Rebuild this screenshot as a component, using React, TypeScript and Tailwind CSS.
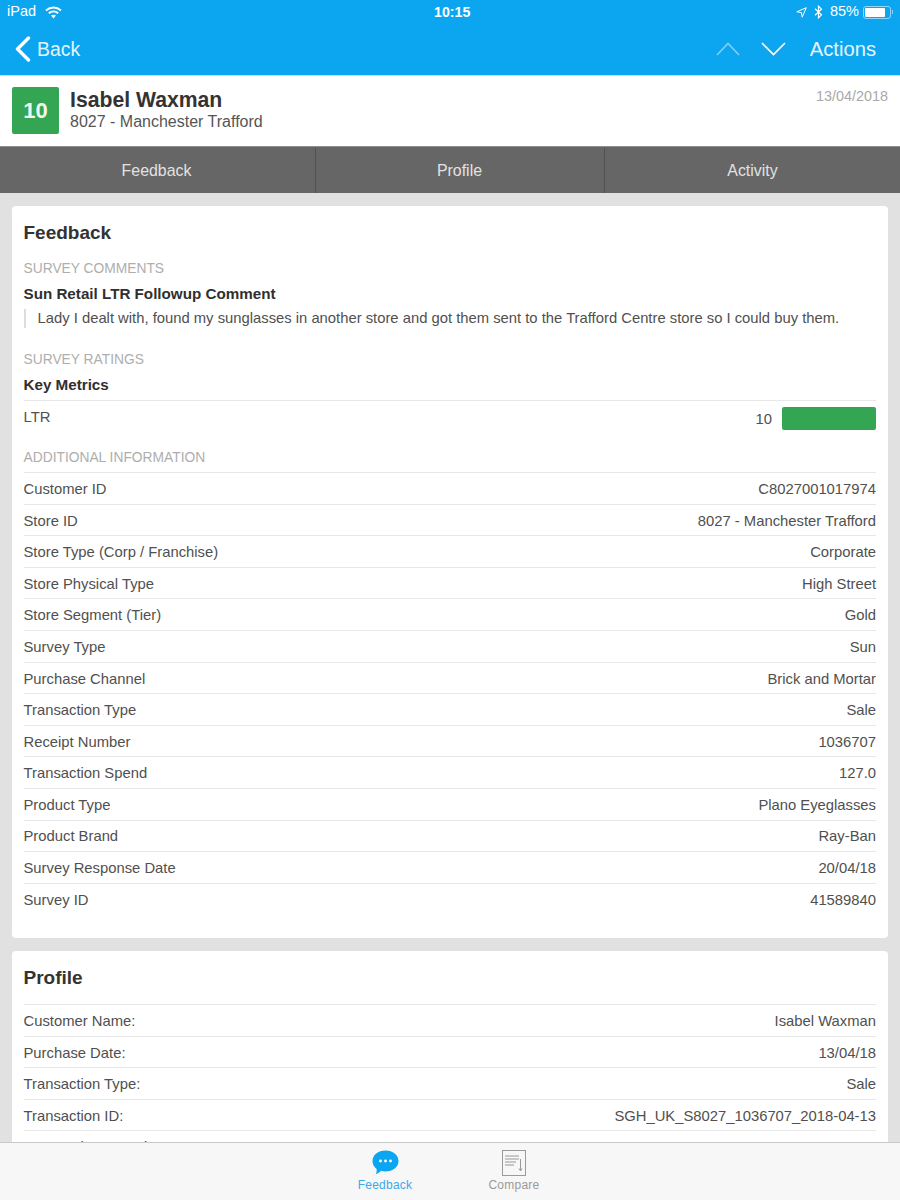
import React from "react";

const info: [string, string][] = [
  ["Customer ID", "C8027001017974"],
  ["Store ID", "8027 - Manchester Trafford"],
  ["Store Type (Corp / Franchise)", "Corporate"],
  ["Store Physical Type", "High Street"],
  ["Store Segment (Tier)", "Gold"],
  ["Survey Type", "Sun"],
  ["Purchase Channel", "Brick and Mortar"],
  ["Transaction Type", "Sale"],
  ["Receipt Number", "1036707"],
  ["Transaction Spend", "127.0"],
  ["Product Type", "Plano Eyeglasses"],
  ["Product Brand", "Ray-Ban"],
  ["Survey Response Date", "20/04/18"],
  ["Survey ID", "41589840"],
];
const profile: [string, string][] = [
  ["Customer Name:", "Isabel Waxman"],
  ["Purchase Date:", "13/04/18"],
  ["Transaction Type:", "Sale"],
  ["Transaction ID:", "SGH_UK_S8027_1036707_2018-04-13"],
  ["Transaction Spend:", "127.0"],
];

function Row({ k, v }: { k: string; v: string }) {
  return (
    <div className="flex h-[31.6px] shrink-0 items-center justify-between border-t border-[#e8e8e8] pt-[1.5px] text-[14.8px] text-[#505050]">
      <span>{k}</span>
      <span>{v}</span>
    </div>
  );
}

function Section({ children }: { children: React.ReactNode }) {
  return <div className="text-[13.8px] leading-[18px] text-[#aeaeae]">{children}</div>;
}

export default function App() {
  return (
    <div className="flex h-[1200px] w-[900px] flex-col overflow-hidden bg-[#e1e1e1] font-['Liberation_Sans',Arial,sans-serif]">
      <div className="h-[75px] shrink-0 bg-[#0ca5ef] text-white">
        <div className="relative flex h-[24px] items-center justify-between pl-[7px] pr-[7px] text-[14.5px]">
          <div className="flex items-center gap-[9px]">
            <span>iPad</span>
            <svg width="17" height="13" viewBox="0 0 17 13" fill="none" stroke="white" strokeWidth="2">
              <path d="M1 4.5C5.5 .5 11.5 .5 16 4.5" />
              <path d="M3.8 7.2C6.5 5 10.5 5 13.2 7.2" />
              <path d="M8.5 12.5L6 9.6C7.5 8.6 9.5 8.6 11 9.6Z" fill="white" stroke="none" />
            </svg>
          </div>
          <div className="absolute left-[434px] top-[3px] text-[14.2px] font-bold leading-[18px]">10:15</div>
          <div className="flex items-center">
            <svg width="11" height="11" viewBox="0 0 11 11" fill="none" stroke="white" strokeWidth="1" className="mr-[7px]">
              <path d="M10.3.7L.8 4.8 5.4 5.6 6.2 10.2Z" />
            </svg>
            <svg width="9" height="14" viewBox="0 0 9 14" fill="none" stroke="white" strokeWidth="1.2" className="mr-[7px]">
              <path d="M1 3.7L7.5 9.8 4.5 12.8V1.2L7.5 4.2 1 10.3" />
            </svg>
            <span className="mr-[4px]">85%</span>
            <div className="flex h-[13px] w-[28px] items-center rounded-[3px] border border-[#8fd6fa] p-[1px]">
              <div className="h-full w-[85%] rounded-[1px] bg-white" />
            </div>
            <div className="ml-[1px] h-[4px] w-[1px] bg-[#8fd6fa]" />
          </div>
        </div>
        <div className="flex h-[51px] items-center justify-between pl-[15px] pr-[24px]">
          <div className="flex items-center gap-[6px]">
            <svg width="16" height="26" viewBox="0 0 16 26" fill="none" stroke="white" strokeWidth="3.4" strokeLinecap="round" strokeLinejoin="round">
              <path d="M13.5 2L2.5 13 13.5 24" />
            </svg>
            <span className="text-[19.4px] text-[#e4f5fe]">Back</span>
          </div>
          <div className="flex items-center">
            <svg width="24" height="14" viewBox="0 0 24 14" fill="none" stroke="#7fd0f7" strokeWidth="1.6" className="mr-[21px]">
              <path d="M1 13L12 1.5 23 13" />
            </svg>
            <svg width="25" height="14" viewBox="0 0 25 14" fill="none" stroke="white" strokeWidth="1.6" className="mr-[24px]">
              <path d="M1 1L12.5 12.5 24 1" />
            </svg>
            <span className="text-[20.2px] text-[#e4f5fe]">Actions</span>
          </div>
        </div>
      </div>

      <div className="flex h-[71px] shrink-0 items-start justify-between border-t border-[#b5e3fa] bg-white pl-[12px] pr-[12px]">
        <div className="flex pt-[11px]">
          <div className="flex h-[47px] w-[47px] items-center justify-center rounded-[2px] bg-[#34a552] text-[22px] font-bold text-[#eef8f0]">10</div>
          <div className="ml-[11px]">
            <div className="mt-[1px] text-[21.2px] font-bold leading-[24px] text-[#333333]">Isabel Waxman</div>
            <div className="text-[16px] leading-[19px] text-[#555555]">8027 - Manchester Trafford</div>
          </div>
        </div>
        <div className="pt-[12px] text-[14.4px] leading-[16px] text-[#a9a9a9]">13/04/2018</div>
      </div>

      <div className="flex h-[47px] shrink-0 border-t border-[#8e8e8e] bg-[#666666] pt-[1px] text-[15.9px] text-[#e2e2e2]">
        <div className="flex w-[316px] items-center justify-center border-r border-[#525252] pr-[2px]">Feedback</div>
        <div className="flex w-[289px] items-center justify-center border-r border-[#525252] pr-[1px]">Profile</div>
        <div className="flex flex-1 items-center justify-center">Activity</div>
      </div>

      <div className="flex min-h-0 flex-1 flex-col gap-[13px] overflow-hidden px-[12px] pt-[13px]">
        <div className="h-[732px] shrink-0 rounded-[4px] bg-white pl-[11.5px] pr-[12px]">
          <h2 className="pt-[15px] text-[19px] font-bold leading-[23px] text-[#333333]">Feedback</h2>
          <div className="mt-[16px]"><Section>SURVEY COMMENTS</Section></div>
          <div className="mt-[7px] text-[15.2px] font-bold leading-[18px] text-[#2f2f2f]">Sun Retail LTR Followup Comment</div>
          <div className="mt-[6px] flex h-[19px] items-center whitespace-nowrap border-l-[2px] border-[#dddddd] pl-[12px] text-[14.8px] text-[#505050]">
            Lady I dealt with, found my sunglasses in another store and got them sent to the Trafford Centre store so I could buy them.
          </div>
          <div className="mt-[23px]"><Section>SURVEY RATINGS</Section></div>
          <div className="mt-[7px] text-[15.2px] font-bold leading-[18px] text-[#2f2f2f]">Key Metrics</div>
          <div className="mt-[6px] flex h-[38px] items-start justify-between border-t border-[#e8e8e8] pt-[6px] text-[14.8px] text-[#505050]">
            <span className="leading-[20px]">LTR</span>
            <div className="flex items-center gap-[10px]">
              <span className="mt-[1px]">10</span>
              <div className="h-[23px] w-[94px] rounded-[2px] bg-[#34a552]" />
            </div>
          </div>
          <div className="mt-[11px] mb-[5px]"><Section>ADDITIONAL INFORMATION</Section></div>
          <div className="flex flex-col">
            {info.map(([k, v]) => <Row key={k} k={k} v={v} />)}
          </div>
        </div>
        <div className="shrink-0 rounded-[4px] bg-white pl-[11.5px] pr-[12px]">
          <h2 className="pt-[15px] pb-[15px] text-[19px] font-bold leading-[23px] text-[#333333]">Profile</h2>
          <div className="flex flex-col">
            {profile.map(([k, v]) => <Row key={k} k={k} v={v} />)}
          </div>
        </div>
      </div>

      <div className="flex h-[58px] shrink-0 justify-center border-t border-[#c9c9c9] bg-[#f7f7f7]">
        <div className="flex w-[128px] flex-col items-center pt-[7px]">
          <svg width="27" height="25" viewBox="0 0 27 25">
            <path d="M13.5 0.5C20.8 0.5 26.5 5 26.5 11S20.8 21.5 13.5 21.5C11.8 21.5 10.4 21.3 9 20.8 7.5 22.5 5 24 3.8 24.3 4.6 22.8 4.9 20.8 4.6 19 2 17 .5 14.2 .5 11 .5 5 6.2.5 13.5.5Z" fill="#0ca5ef" />
            <circle cx="8.5" cy="11" r="1.4" fill="white" />
            <circle cx="13.5" cy="11" r="1.4" fill="white" />
            <circle cx="18.5" cy="11" r="1.4" fill="white" />
          </svg>
          <span className="mt-[2px] text-[12px] leading-[16px] tracking-[0.25px] text-[#3aa9e8]">Feedback</span>
        </div>
        <div className="flex w-[130px] flex-col items-center pt-[7px]">
          <svg width="24" height="26" viewBox="0 0 24 26" fill="none" stroke="#9a9a9a">
            <rect x="0.5" y="0.5" width="23" height="25" strokeWidth="1" />
            <path d="M3 6H17M3 9H17M3 12H14M3 15H12" strokeWidth="1.2" />
            <path d="M18.5 9V20M17 18.5L18.5 21 20 18.5" strokeWidth="1" />
          </svg>
          <span className="mt-[1px] text-[12px] leading-[16px] tracking-[0.25px] text-[#9a9a9a]">Compare</span>
        </div>
      </div>
    </div>
  );
}
